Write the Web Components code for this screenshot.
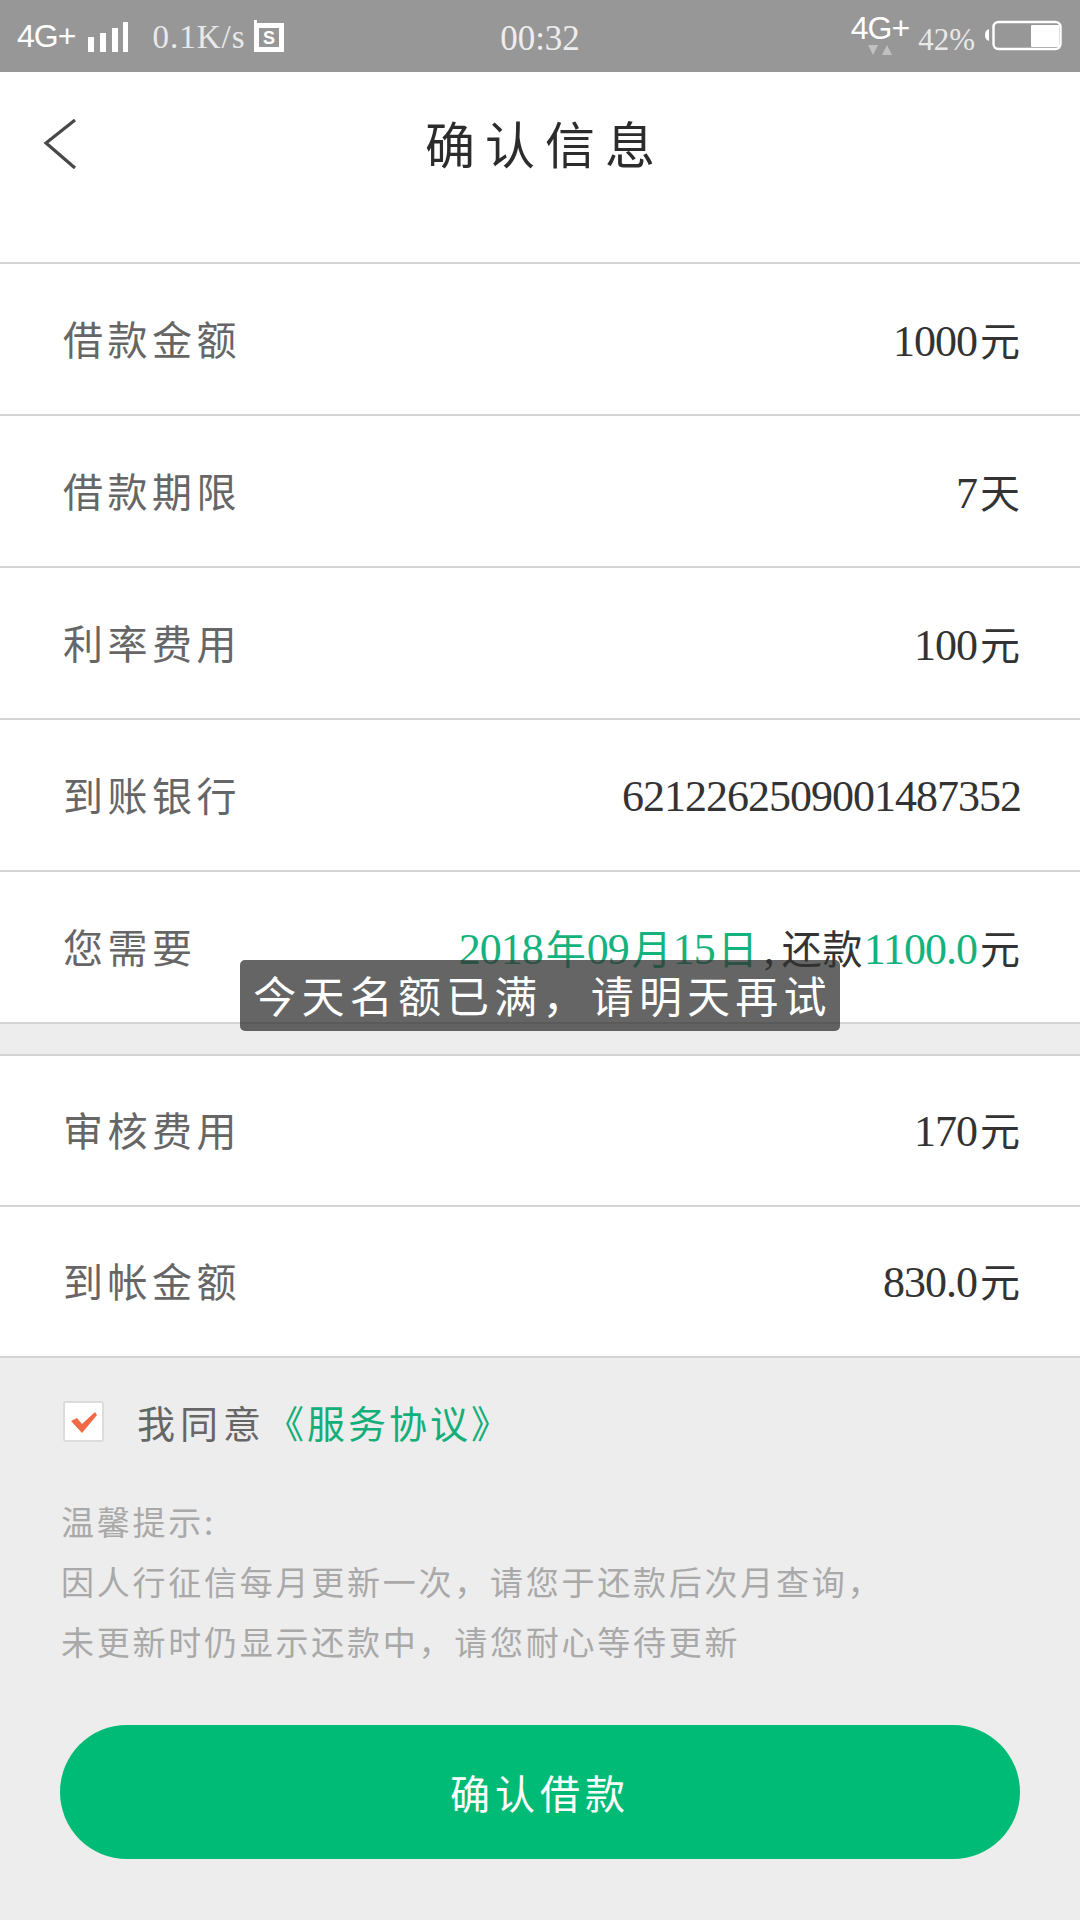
<!DOCTYPE html>
<html lang="zh"><head><meta charset="utf-8"><title>确认信息</title>
<style>
html,body{margin:0;padding:0;background:#ededed}
body{width:1080px;height:1920px;overflow:hidden;position:relative;font-family:"Liberation Serif","Noto Sans CJK SC",serif}
</style></head><body>
<app-page>
  <status-bar></status-bar>
  <nav-header>确认信息</nav-header>
  <info-list>
    <info-row label="借款金额">1000<c-k>元</c-k></info-row>
    <info-row label="借款期限">7<c-k>天</c-k></info-row>
    <info-row label="利率费用">100<c-k>元</c-k></info-row>
    <info-row label="到账银行">6212262509001487352</info-row>
    <info-row label="您需要"><g-t>2018<c-k>年</c-k>09<c-k>月</c-k>15<c-k>日</c-k></g-t><c-m>,</c-m><c-k>还款</c-k><g-t>1100.0</g-t><c-k>元</c-k></info-row>
  </info-list>
  <info-list class="second">
    <info-row label="审核费用">170<c-k>元</c-k></info-row>
    <info-row label="到帐金额">830.0<c-k>元</c-k></info-row>
  </info-list>
  <agree-row>《服务协议》</agree-row>
  <tip-block>
    <div>温馨提示:</div>
    <div>因人行征信每月更新一次，请您于还款后次月查询，</div>
    <div>未更新时仍显示还款中，请您耐心等待更新</div>
  </tip-block>
  <primary-button>确认借款</primary-button>
  <toast-msg>今天名额已满，请明天再试</toast-msg>
</app-page>
<script>
function def(name, html, init){
  customElements.define(name, class extends HTMLElement{
    constructor(){super();const r=this.attachShadow({mode:'open'});r.innerHTML=html;}
    connectedCallback(){ if(init) init(this); }
  });
}
const CJK='"Noto Sans CJK SC",sans-serif';
def('app-page',`<style>:host{display:flex;flex-direction:column;width:1080px;height:1920px;position:relative;background:#ededed}</style><slot></slot>`);
def('status-bar',`<style>
:host{display:grid;grid-template-columns:1fr auto 1fr;align-items:center;height:72px;background:#979797;color:#fff;padding:0 17px;box-sizing:border-box;flex:none}
.l,.r{display:flex;align-items:center}
.r{justify-content:flex-end}
.g{font:400 32px/1 "Liberation Sans",sans-serif;letter-spacing:-1px;color:#fff}
.t{font:32px/1 "Liberation Serif",serif;color:#e9e9e9}
.net{margin-left:24px;letter-spacing:1px;font-size:33px;padding-top:3px}
.time{font-size:35px;color:#eee;padding-top:5px}
.stack{display:flex;flex-direction:column;align-items:center;margin-top:-4px}
svg{display:block}
</style>
<div class="l"><span class="g">4G+</span>
<svg style="margin-left:12px;margin-top:2px" width="41" height="30" viewBox="0 0 41 30"><path fill="#fff" d="M1 15h6v15H1zM13 11h6v19h-6zM25 6h6v24h-6zM36 0h5v30h-5z"/></svg>
<span class="t net">0.1K/s</span>
<svg style="margin-left:9px" width="30" height="32" viewBox="0 0 30 32"><path fill="#fff" fill-rule="evenodd" d="M0 0h3v3h27v29H0zM5 8v19h20V8z"/><text x="15" y="24" text-anchor="middle" font-family="Liberation Sans" font-weight="700" font-size="18" fill="#fff">S</text></svg></div>
<div class="t time">00:32</div>
<div class="r"><div class="stack"><span class="g">4G+</span>
<svg width="26" height="11" viewBox="0 0 26 11" style="margin-top:1px"><path fill="#c0c0c0" d="M1 0h10L6 10zM15 10h10L20 0z"/></svg></div>
<span class="t" style="margin-left:9px;font-size:31px;padding-top:6px">42%</span>
<svg style="margin-left:9px;margin-right:1px" width="78" height="32" viewBox="0 0 78 32"><path fill="#fff" d="M5 9v12c-3-1-4-3-4-6s1-5 4-6z"/><rect x="9.5" y="2" width="67" height="27" rx="5" fill="none" stroke="#fff" stroke-width="2.4"/><rect x="47" y="5" width="28" height="22" rx="1" fill="#fff"/></svg></div>`);
def('nav-header',`<style>
:host{display:block;position:relative;height:192px;background:#fff;flex:none;box-sizing:border-box;border-bottom:2px solid #d4d4d4}
.row{display:flex;align-items:center;justify-content:center;height:140px}
.t{font:400 50px/1 ${CJK};letter-spacing:10px;margin-right:-10px;color:#2c2c2c}
svg{position:absolute;left:42px;top:46px}
</style><svg width="36" height="52" viewBox="0 0 36 52"><path d="M33 2 4 25l29 25" fill="none" stroke="#484848" stroke-width="3.2"/></svg><div class="row"><span class="t"><slot></slot></span></div>`);
def('info-list',`<style>:host{display:block;background:#fff;flex:none}
:host(.second){margin-top:30px;border-top:2px solid #d4d4d4;--row-h:151px;--row-pb:4px}</style><slot></slot>`);
def('info-row',`<style>
:host{display:flex;align-items:center;justify-content:space-between;height:var(--row-h,152px);box-sizing:border-box;border-bottom:2px solid #d4d4d4;padding:0 60px var(--row-pb,2px) 63px;background:#fff}
.lab{font:400 40px/1 ${CJK};letter-spacing:4.5px;color:#666}
.val{font:44px/1 "Liberation Serif","Noto Sans CJK SC",serif;color:#333;letter-spacing:-1px;padding-top:6px;margin-right:-1px}
</style><span class="lab"></span><span class="val"><slot></slot></span>`,el=>{el.shadowRoot.querySelector('.lab').textContent=el.getAttribute('label')});
def('g-t',`<style>:host{color:#14b27c}</style><slot></slot>`);
def('c-k',`<style>:host{font:400 40px/1 ${CJK};letter-spacing:1px;margin-left:3px}</style><slot></slot>`);
def('c-m',`<style>:host{margin:0 5px}</style><slot></slot>`);
def('agree-row',`<style>
:host{display:flex;align-items:center;height:130px;box-sizing:border-box;padding:0 0 3px 63px;flex:none}
.c{width:41px;height:41px;box-sizing:border-box;border:2px solid #dcdcdc;border-radius:3px;background:#fff;display:flex;align-items:center;justify-content:center}
.a{font:400 38px/1 ${CJK};letter-spacing:5px;color:#666;margin-left:33px}
.b{font:400 38px/1 ${CJK};letter-spacing:3px;color:#14ae78;margin-left:0}
</style><span class="c"><svg width="30" height="26" viewBox="0 0 30 26"><path d="M2 12l6-3 5 6L26 3l2 3-15 18z" fill="#f26a45"/></svg></span><span class="a">我同意</span><span class="b"><slot></slot></span>`);
def('tip-block',`<style>
:host{display:block;flex:none;padding:0 0 0 61px;margin-top:3px;font:400 33px/60px ${CJK};letter-spacing:2.75px;color:#a9a9a9}
</style><slot></slot>`);
def('primary-button',`<style>
:host{display:flex;align-items:center;justify-content:center;flex:none;width:960px;height:134px;margin:54px 0 0 60px;border-radius:67px;background:#00bb75;color:#fff;font:400 40px/1 ${CJK};letter-spacing:5px}
</style><slot></slot>`);
def('toast-msg',`<style>
:host{position:absolute;left:240px;top:960px;width:600px;height:71px;padding:0 0 3px 5px;box-sizing:border-box;background:rgba(50,50,50,.75);border-radius:5px;display:flex;align-items:center;justify-content:center;color:#fff;font:400 43px/1 ${CJK};letter-spacing:5.2px}
</style><slot></slot>`);
</script>
</body></html>
